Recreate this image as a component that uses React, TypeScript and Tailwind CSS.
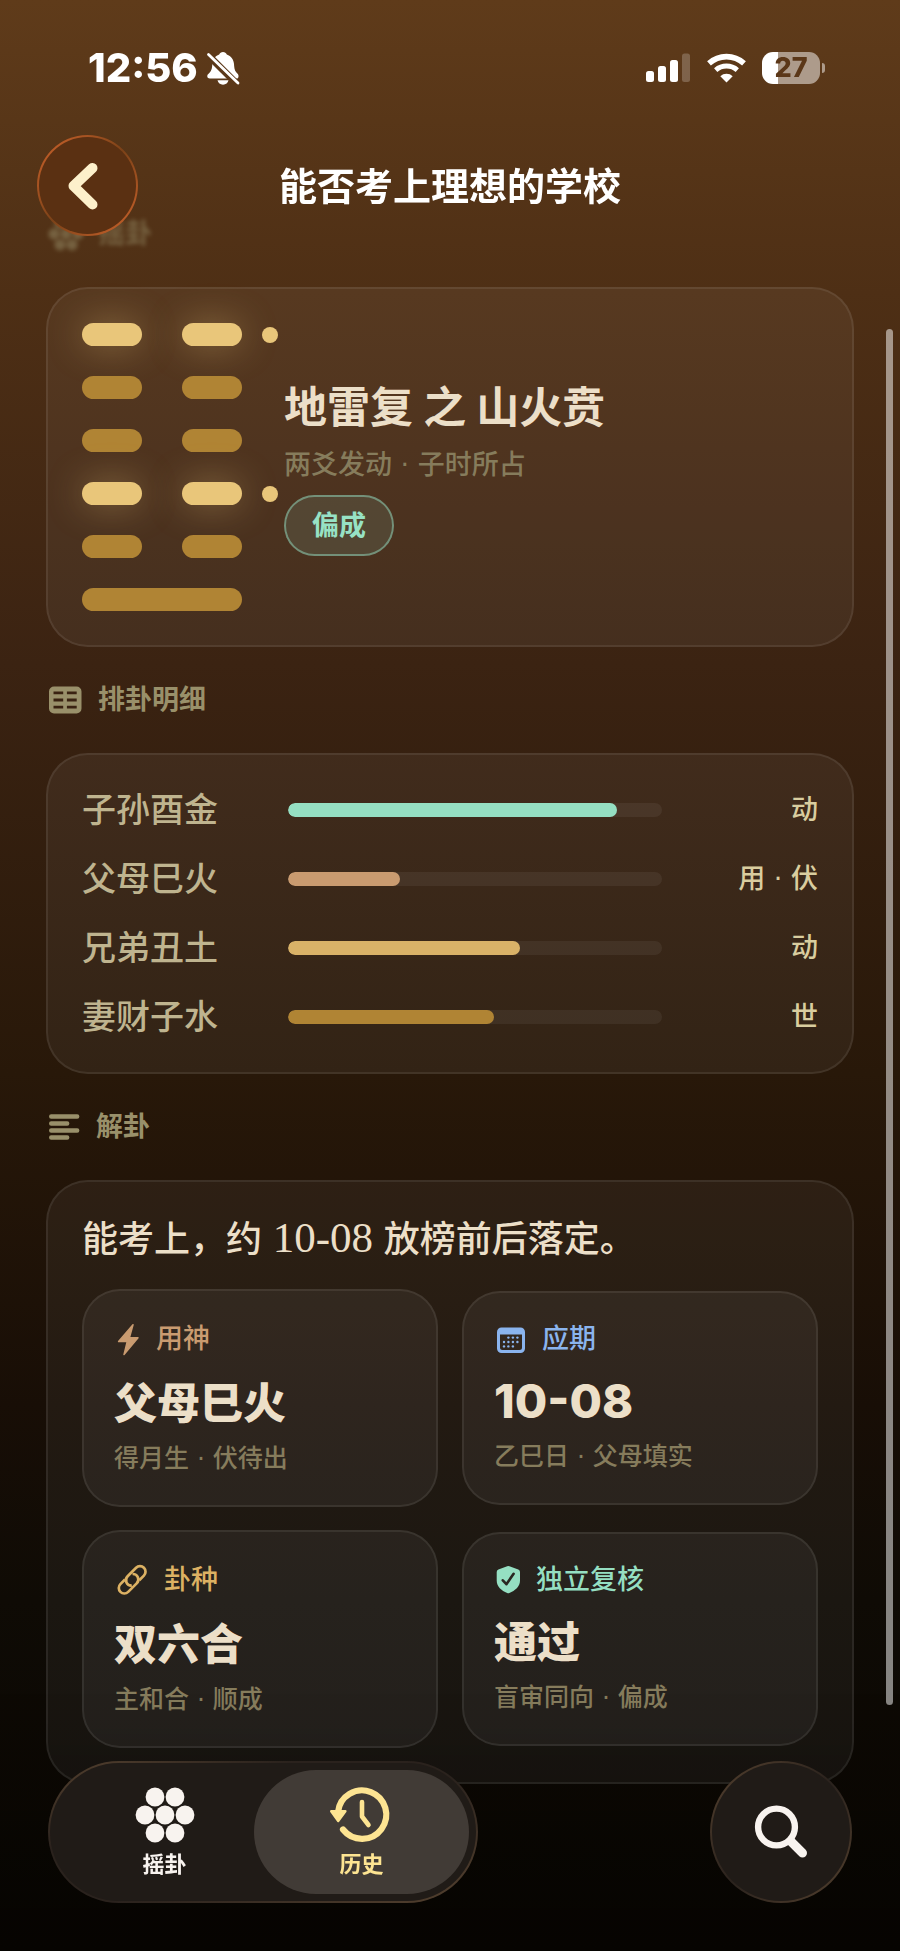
import React from 'react';
import clsx from 'clsx';

interface IconProps {
  className?: string;
}

interface HexagramLine {
  solid: boolean;
  moving: boolean;
}

interface DetailRow {
  label: string;
  percent: number;
  tone: string;
  note: string;
}

interface Tile {
  icon: React.ReactNode;
  label: string;
  tone: string;
  value: string;
  valueSize: string;
  note: string;
}

const BellOffIcon: React.FC<IconProps> = ({ className }) => (
  <svg viewBox="0 0 36 36" className={className} fill="currentColor" aria-hidden="true">
    <mask id="bell-slash">
      <rect width="36" height="36" fill="white" />
      <path d="M1 3 33 35" stroke="black" strokeWidth="7" />
    </mask>
    <g mask="url(#bell-slash)">
      <path d="M18 2c1.800 0 3.200 1 3.800 2.400 4.400 1.600 6.900 5.100 7.200 9.600.3 5 .9 7.300 3.600 9.700 1.300 1.200 1.500 4.800-.9 4.800H4.800C2 28.500 1.600 25.500 3.300 24c3-2.700 3.800-5 4-10 .2-4.500 2.600-8 6.900-9.600C14.800 3 16.200 2 18 2Z" />
    </g>
    <path d="M12.500 30.300h11c-.5 2.600-2.700 4.400-5.500 4.400s-5-1.800-5.500-4.400Z" />
    <path d="M3.500 4.500 33 33" stroke="currentColor" strokeWidth="2.800" strokeLinecap="round" />
  </svg>
);

const SignalIcon: React.FC<IconProps> = ({ className }) => (
  <svg viewBox="0 0 45 32" className={className} fill="currentColor" aria-hidden="true">
    <rect x="0" y="19" width="8" height="11" rx="2.500" />
    <rect x="12" y="14" width="8" height="16" rx="2.500" />
    <rect x="24" y="8" width="8" height="22" rx="2.500" />
    <rect x="36" y="1.500" width="8" height="28.500" rx="2.500" opacity="0.22" />
  </svg>
);

const WifiIcon: React.FC<IconProps> = ({ className }) => (
  <svg viewBox="0 0 39 32" className={className} fill="none" stroke="currentColor" aria-hidden="true">
    <path d="M2 11.400a26 26 0 0 1 35 0" strokeWidth="5.600" />
    <path d="M8.700 18.100a16.500 16.500 0 0 1 21.600 0" strokeWidth="5" />
    <path d="M19.500 30.500 13.300 24.300a9 9 0 0 1 12.400 0Z" fill="currentColor" stroke="none" />
  </svg>
);

const ChevronLeftIcon: React.FC<IconProps> = ({ className }) => (
  <svg viewBox="0 0 60 60" className={className} fill="none" stroke="currentColor" strokeWidth="10" strokeLinecap="round" strokeLinejoin="round" aria-hidden="true">
    <path d="M34.500 12 15.500 30l19 18.500" />
  </svg>
);

const CoinsIcon: React.FC<IconProps> = ({ className }) => (
  <svg viewBox="0 0 60 60" className={className} fill="currentColor" aria-hidden="true">
    {[[20, 12], [40, 12], [10, 30], [30, 30], [50, 30], [20, 48], [40, 48]].map(([cx, cy]) => (
      <circle key={`${cx}-${cy}`} cx={cx} cy={cy} r="9.400" />
    ))}
  </svg>
);

const TableIcon: React.FC<IconProps> = ({ className }) => (
  <svg viewBox="0 0 36 36" className={className} fill="currentColor" fillRule="evenodd" aria-hidden="true">
    <path d="M6 4.500h22.500a5 5 0 0 1 5 5v17a5 5 0 0 1-5 5H6a5 5 0 0 1-5-5v-17a5 5 0 0 1 5-5ZM5.500 9.500v2.800h9.700V9.500Zm13.400 0v2.800h9.800V9.500ZM5.500 16.600v2.800h9.700v-2.800Zm13.400 0v2.800h9.800v-2.800ZM5.500 23.700v2.800h9.700v-2.800Zm13.400 0v2.800h9.800v-2.800Z" />
  </svg>
);

const TextLinesIcon: React.FC<IconProps> = ({ className }) => (
  <svg viewBox="0 0 34 36" className={className} fill="none" stroke="currentColor" strokeWidth="4.400" strokeLinecap="round" aria-hidden="true">
    <path d="M3.200 7.500h26M3.200 14.500h16M3.200 21.500h26M3.200 28.500h16" />
  </svg>
);

const BoltIcon: React.FC<IconProps> = ({ className }) => (
  <svg viewBox="0 0 28 36" className={className} fill="currentColor" stroke="currentColor" strokeWidth="1.500" strokeLinejoin="round" aria-hidden="true">
    <path d="M19 3.800 4.600 20.600h8.600L10 33.600 24 16.800h-8.600Z" />
  </svg>
);

const CalendarIcon: React.FC<IconProps> = ({ className }) => (
  <svg viewBox="0 0 34 32" className={className} fill="currentColor" aria-hidden="true">
    <path fillRule="evenodd" d="M7.500 4.500h19A4.500 4.500 0 0 1 31 9v16.500a4.500 4.500 0 0 1-4.500 4.500h-19A4.500 4.500 0 0 1 3 25.500V9a4.500 4.500 0 0 1 4.500-4.500ZM6 11.500v13A2.500 2.500 0 0 0 8.500 27h17a2.500 2.500 0 0 0 2.500-2.500v-13Z" />
    {[[14.4, 14.6], [18.9, 14.6], [23.4, 14.6], [10, 19], [14.4, 19], [18.9, 19], [23.4, 19], [10, 23.4], [14.4, 23.4], [18.9, 23.4]].map(([cx, cy]) => (
      <circle key={`${cx}-${cy}`} cx={cx} cy={cy} r="1.200" />
    ))}
  </svg>
);

const LinkIcon: React.FC<IconProps> = ({ className }) => (
  <svg viewBox="0 0 36 36" className={className} fill="none" stroke="currentColor" strokeWidth="2.700" aria-hidden="true">
    <path d="M25.300 18.200 29.900 13.600A5.500 5.500 0 0 0 22.100 5.800L13.600 14.300A5.500 5.500 0 0 0 17.800 23.700" />
    <path d="M11 17.500 6.400 22.100A5.500 5.500 0 0 0 14.200 29.900L22.700 21.400A5.500 5.500 0 0 0 18.500 12" />
  </svg>
);

const ShieldIcon: React.FC<IconProps> = ({ className }) => (
  <svg viewBox="0 0 28 32" className={className} aria-hidden="true">
    <path d="M13.200 2.300a3 3 0 0 1 2.200 0l8.900 3.300A2.500 2.500 0 0 1 26 8v8.500c0 6-4.900 10.200-10.600 12.500a3 3 0 0 1-2.200 0C7.500 26.700 2.700 22.500 2.700 16.500V8a2.500 2.500 0 0 1 1.700-2.400Z" fill="currentColor" />
    <path d="m8.800 16.300 3.600 3.900 7.200-10.400" fill="none" stroke="#2a2721" strokeWidth="2.600" strokeLinecap="round" strokeLinejoin="round" />
  </svg>
);

const HistoryIcon: React.FC<IconProps> = ({ className }) => (
  <svg viewBox="0 0 60 60" className={clsx('overflow-visible', className)} fill="none" stroke="currentColor" strokeLinecap="round" strokeLinejoin="round" aria-hidden="true">
    <path d="M11 44.500A24.200 24.200 0 1 0 6 27" strokeWidth="6.200" />
    <path d="M-.8 26.200h14.200L6.200 36Z" fill="currentColor" strokeWidth="2.400" />
    <path d="M30 17v14.500l6.500 8.500" strokeWidth="4.600" />
  </svg>
);

const SearchIcon: React.FC<IconProps> = ({ className }) => (
  <svg viewBox="0 0 60 60" className={className} fill="none" stroke="currentColor" strokeLinecap="round" aria-hidden="true">
    <circle cx="25.500" cy="25" r="18.400" strokeWidth="6.400" />
    <path d="m40 39.500 11.500 11.500" strokeWidth="9" />
  </svg>
);

const hexagram: HexagramLine[] = [
  { solid: false, moving: true },
  { solid: false, moving: false },
  { solid: false, moving: false },
  { solid: false, moving: true },
  { solid: false, moving: false },
  { solid: true, moving: false },
];

const details: DetailRow[] = [
  { label: '子孙酉金', percent: 88, tone: 'bg-[#95dfc2]', note: '动' },
  { label: '父母巳火', percent: 30, tone: 'bg-[#c99b70]', note: '用 · 伏' },
  { label: '兄弟丑土', percent: 62, tone: 'bg-[#d9b268]', note: '动' },
  { label: '妻财子水', percent: 55, tone: 'bg-[#b08434]', note: '世' },
];

// Numerals look small beside the characters, so they are set a step larger
const tiles: Tile[] = [
  { icon: <BoltIcon className="h-9 w-7" />, label: '用神', tone: 'text-[#c99b70]', value: '父母巳火', valueSize: 'text-[43px]', note: '得月生 · 伏待出' },
  { icon: <CalendarIcon className="h-8 w-[34px]" />, label: '应期', tone: 'text-[#8ab4ee]', value: '10-08', valueSize: 'text-[47px]', note: '乙巳日 · 父母填实' },
  { icon: <LinkIcon className="size-9" />, label: '卦种', tone: 'text-[#dcb163]', value: '双六合', valueSize: 'text-[43px]', note: '主和合 · 顺成' },
  { icon: <ShieldIcon className="h-8 w-7" />, label: '独立复核', tone: 'text-[#95dfc2]', value: '通过', valueSize: 'text-[43px]', note: '盲审同向 · 偏成' },
];

const StatusBar: React.FC = () => (
  <div className="flex h-[135px] items-center justify-between pr-[75px] pl-[88px] text-white">
    <div className="flex items-center gap-[7px]">
      <span className="text-[40px] leading-[44px] font-extrabold">12:56</span>
      <BellOffIcon className="size-9" />
    </div>
    <div className="flex items-center gap-4">
      <SignalIcon className="h-8 w-[45px]" />
      <WifiIcon className="h-8 w-[39px]" />
      <div className="flex items-center gap-[2px]">
        <div className="flex h-8 w-[58px] items-center justify-center rounded-[11px] bg-[linear-gradient(90deg,#fff_27%,#ad9b8b_27%)] text-[27px] leading-8 font-extrabold text-[#5b3718]">
          27
        </div>
        <div className="h-[10px] w-[3px] rounded-r-full bg-[#ad9b8b]" />
      </div>
    </div>
  </div>
);

const SectionHeading: React.FC<{ icon: React.ReactNode; title: string; faded?: boolean }> = ({ icon, title, faded }) => (
  <h2
    className={clsx(
      'flex h-[106px] items-center gap-[14px] px-[2px] text-[27px] leading-9 font-bold text-[#99906a]',
      faded && 'opacity-50 blur-[2px]',
    )}
  >
    {icon}
    {title}
  </h2>
);

const Hexagram: React.FC = () => (
  <div className="flex w-[196px] shrink-0 flex-col gap-[30px]">
    {hexagram.map((line, index) => {
      const bar = clsx(
        'h-[23px] rounded-full',
        line.moving ? 'bg-[#e9c67a] shadow-[0_0_36px_rgba(233,198,122,0.4)]' : 'bg-[#b08434]',
      );
      return (
        <div key={index} className="flex items-center justify-between">
          <div className="flex w-40 justify-between">
            {line.solid ? (
              <div className={clsx(bar, 'w-full')} />
            ) : (
              <>
                <div className={clsx(bar, 'w-[60px]')} />
                <div className={clsx(bar, 'w-[60px]')} />
              </>
            )}
          </div>
          {line.moving && <div className="size-4 rounded-full bg-[#e9c67a]" />}
        </div>
      );
    })}
  </div>
);

const cardClass = 'rounded-[42px] border-2 border-white/8 bg-white/5 p-[34px]';
const noteFont = "font-['DejaVu_Sans','Noto_Sans_CJK_SC',sans-serif] font-medium";

const App: React.FC = () => (
  <div className="relative min-h-screen bg-[linear-gradient(180deg,#5f3b1a_0%,#4e2f15_15%,#3b2312_34%,#281809_55%,#180e06_72%,#0f0b05_82%,#080502_100%)] font-['Inter','Noto_Sans_CJK_SC',sans-serif]">
    <header className="fixed inset-x-0 top-0 z-20">
      <StatusBar />
      <div className="grid grid-cols-[101px_1fr_101px] items-center px-[37px]">
        <button
          type="button"
          aria-label="返回"
          className="size-[101px] rounded-full bg-[linear-gradient(135deg,#d0642c,#7c4218_50%,#d0642c)] p-[2px]"
        >
          <span className="flex size-full items-center justify-center rounded-full bg-[#5a3012] text-[#fdf0cb]">
            <ChevronLeftIcon className="size-[60px]" />
          </span>
        </button>
        <h1 className="text-center text-[38px] leading-[50px] font-bold text-white">能否考上理想的学校</h1>
      </div>
    </header>

    <main className="px-[46px] pt-[181px] pb-40">
      <section>
        <SectionHeading icon={<CoinsIcon className="size-9" />} title="摇卦" faded />
        <div className={clsx(cardClass, 'flex items-center gap-[6px]')}>
          <Hexagram />
          <div className="flex flex-col items-start">
            <p className="text-[43px] leading-[56px] font-bold text-[#ecdfc8]">地雷复 之 山火贲</p>
            <p className={clsx(noteFont, 'mt-3 text-[27px] leading-9 text-[#867c5c]')}>两爻发动 · 子时所占</p>
            <span className="mt-3 rounded-full border-2 border-[#95dfc2]/55 bg-[#95dfc2]/12 bg-clip-padding px-[26px] py-[10px] text-[27px] leading-[37px] font-bold text-[#97e2c5]">
              偏成
            </span>
          </div>
        </div>
      </section>

      <section>
        <SectionHeading icon={<TableIcon className="size-9" />} title="排卦明细" />
        <ul className={clsx(cardClass, 'flex flex-col gap-[27px]')}>
          {details.map((row) => (
            <li key={row.label} className="flex items-center gap-5">
              <span className="w-[186px] text-[34px] leading-[42px] font-medium text-[#bfb48f]">{row.label}</span>
              <div className="h-[14px] flex-1 overflow-hidden rounded-full bg-white/6">
                <div className={clsx('h-full rounded-full', row.tone)} style={{ width: `${row.percent}%` }} />
              </div>
              <span className={clsx(noteFont, 'w-[136px] text-right text-[27px] leading-9 text-[#d9cd9f]')}>{row.note}</span>
            </li>
          ))}
        </ul>
      </section>

      <section>
        <SectionHeading icon={<TextLinesIcon className="h-9 w-[34px]" />} title="解卦" />
        <div className={cardClass}>
          <p className="text-[36px] leading-[46px] font-medium text-[#ecdfc8]">
            能考上，约
            <span className="font-['Liberation_Serif',serif] text-[43px] leading-none whitespace-pre"> 10-08 </span>
            放榜前后落定。
          </p>
          <div className="mt-[27px] grid grid-cols-2 items-center gap-x-6 gap-y-[23px]">
            {tiles.map((tile) => (
              <article key={tile.label} className="rounded-[38px] border-2 border-white/8 bg-white/5 p-[30px]">
                <h3 className={clsx('flex items-center gap-[14px] text-[27px] leading-8 font-medium', tile.tone)}>
                  {tile.icon}
                  {tile.label}
                </h3>
                <p className={clsx('mt-[18px] leading-[56px] font-extrabold text-[#ecdfc8]', tile.valueSize)}>{tile.value}</p>
                <p className={clsx(noteFont, 'mt-3 text-[25px] leading-8 text-[#867c5c]')}>{tile.note}</p>
              </article>
            ))}
          </div>
        </div>
      </section>
    </main>

    <div className="pointer-events-none fixed top-[329px] right-[7px] bottom-[246px] z-20 w-[7px] rounded-full bg-white/50" />
    <div className="pointer-events-none fixed inset-x-0 bottom-0 z-10 h-[260px] bg-linear-to-b from-transparent to-black/20" />

    <div className="fixed inset-x-0 bottom-12 z-20 flex items-center justify-between px-12">
      <nav className="rounded-full bg-[linear-gradient(160deg,#54412f,#2a221d_30%,#2a221d_55%,#54412f)] p-[2px]">
        <div className="flex rounded-full bg-[#201b17] p-[7px]">
          <button type="button" className="flex h-[124px] w-[215px] flex-col items-center justify-center gap-[3px] rounded-full text-[#f8f3ef]">
            <CoinsIcon className="size-[60px]" />
            <span className="text-[22px] leading-8 font-bold">摇卦</span>
          </button>
          <button
            type="button"
            aria-current="page"
            className="-ml-[18px] flex h-[124px] w-[215px] flex-col items-center justify-center gap-[3px] rounded-full bg-[#413b36] text-[#fde492]"
          >
            <HistoryIcon className="size-[60px]" />
            <span className="text-[22px] leading-8 font-bold">历史</span>
          </button>
        </div>
      </nav>
      <button
        type="button"
        aria-label="搜索"
        className="size-[142px] rounded-full bg-[linear-gradient(135deg,#54412f,#2a221d_50%,#54412f)] p-[2px]"
      >
        <span className="flex size-full items-center justify-center rounded-full bg-[#201b17] text-[#f8f3ef]">
          <SearchIcon className="size-[60px]" />
        </span>
      </button>
    </div>
  </div>
);

export default App;
